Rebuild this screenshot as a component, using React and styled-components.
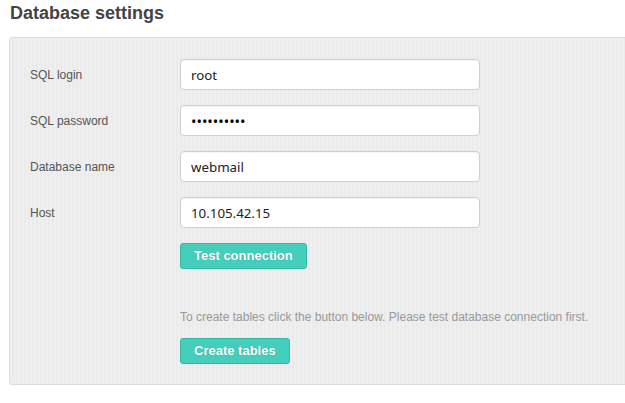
import React from "react";
import styled, { createGlobalStyle } from "styled-components";

const Global = createGlobalStyle`
  html, body { margin: 0; padding: 0; background: #fff; overflow: hidden; }
  body { font-family: "Liberation Sans", Arial, sans-serif; }
`;

const Page = styled.div`
  width: 625px;
  height: 403px;
  overflow: hidden;
`;

const Title = styled.h1`
  margin: 0;
  padding: 2px 10px 0;
  font-size: 18px;
  line-height: 22px;
  font-weight: bold;
  color: #444;
`;

const Panel = styled.div`
  margin: 13px 0 0 9px;
  width: 640px;
  box-sizing: border-box;
  border: 1px solid #dcdcdc;
  border-radius: 3px;
  padding: 21px 20px 20px;
  background: repeating-linear-gradient(90deg, #efefef 0 2px, #ebebeb 2px 4px);
`;

const Row = styled.div`
  display: flex;
  align-items: center;
  margin-bottom: ${(p) => p.$gap ?? 15}px;
`;

const Label = styled.label`
  width: 150px;
  flex: none;
  font-size: 12px;
  color: #555;
  line-height: 16px;
`;

const Spacer = styled.div`
  width: 150px;
  flex: none;
`;

const Field = styled.input`
  box-sizing: border-box;
  width: 300px;
  height: 31px;
  padding: 0 10px;
  border: 1px solid #cfcfcf;
  border-radius: 4px;
  background: #fff;
  font-family: "Noto Sans", "Open Sans", sans-serif;
  font-size: 13.3px;
  color: #222;
  outline: none;
  box-shadow: inset 0 1px 1px rgba(0,0,0,0.04);
  &[type="password"] {
    font-size: 14.5px;
    color: #000;
  }
`;

const Button = styled.button`
  box-sizing: border-box;
  height: 26px;
  padding: 0 13px;
  border: 1px solid #35b7a6;
  border-radius: 3px;
  background: #44cfbd;
  color: #fff;
  font-family: "Liberation Sans", Arial, sans-serif;
  font-weight: bold;
  font-size: 13px;
  line-height: 24px;
  text-shadow: 0 0 1px rgba(0,0,0,0.3);
  cursor: pointer;
`;

const Hint = styled.p`
  margin: 0;
  font-size: 12px;
  line-height: 16px;
  color: #999;
`;

const fields = [
  { label: "SQL login", value: "root" },
  { label: "SQL password", value: "1234567890", type: "password" },
  { label: "Database name", value: "webmail" },
  { label: "Host", value: "10.105.42.15" },
];

export default function App() {
  return (
    <Page>
      <Global />
      <Title>Database settings</Title>
      <Panel>
        {fields.map((f) => (
          <Row key={f.label}>
            <Label>{f.label}</Label>
            <Field type={f.type || "text"} defaultValue={f.value} readOnly />
          </Row>
        ))}
        <Row $gap={40}>
          <Spacer />
          <Button>Test connection</Button>
        </Row>
        <Row $gap={13}>
          <Spacer />
          <Hint>To create tables click the button below. Please test database connection first.</Hint>
        </Row>
        <Row $gap={0}>
          <Spacer />
          <Button>Create tables</Button>
        </Row>
      </Panel>
    </Page>
  );
}
